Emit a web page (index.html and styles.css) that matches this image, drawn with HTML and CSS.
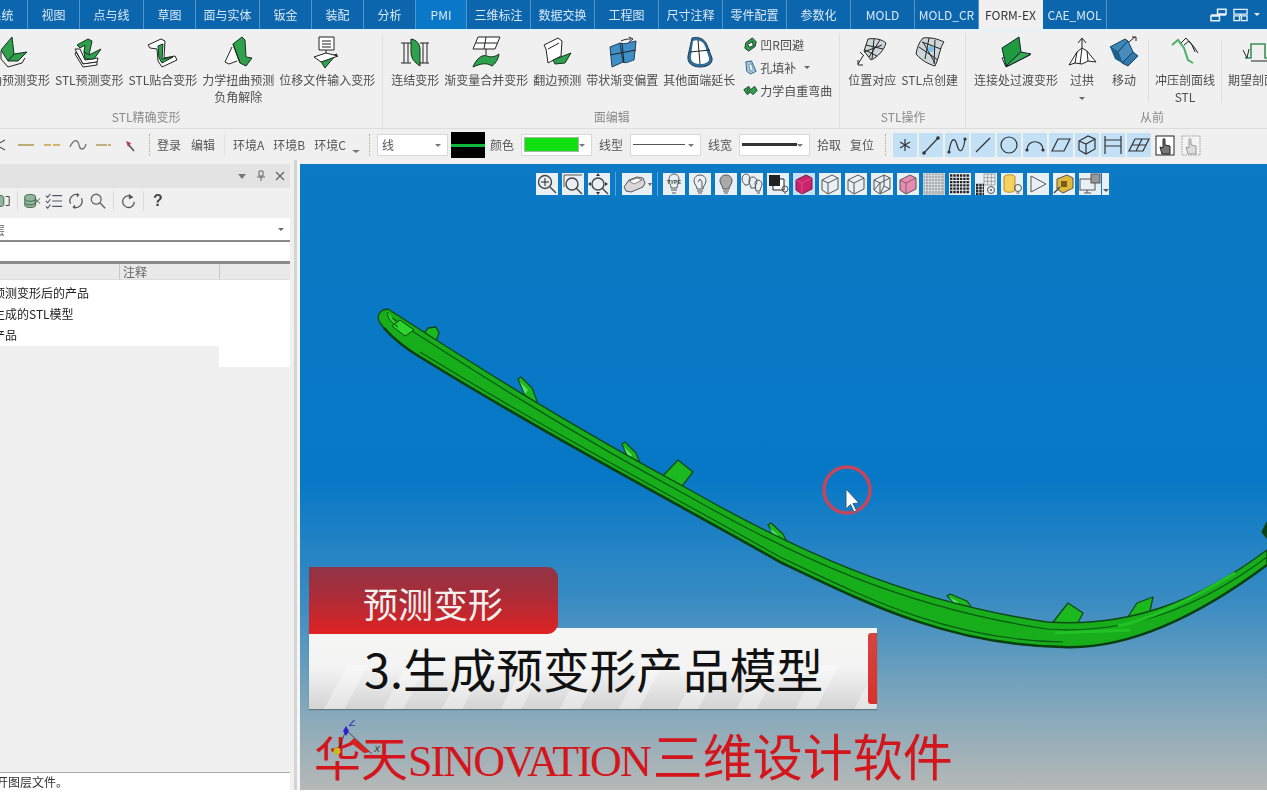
FILE: index.html
```html
<!DOCTYPE html>
<html lang="zh">
<head>
<meta charset="utf-8">
<title>SINOVATION FORM-EX</title>
<link rel="stylesheet" href="styles.css">
</head>
<body>
<svg class="defs" width="0" height="0" aria-hidden="true">
  <defs>
    <symbol id="r1" viewBox="0 0 32 32"><path class="ln" d="M3 15V23L10 31 24 27 27 22"/><path class="gr" d="M3 14 14 1 16 18 10 25Z"/><path class="gr" d="M16 18 29 16 20 25H10Z"/></symbol>
    <symbol id="r2" viewBox="0 0 32 32"><path class="wh" d="M2 13 4 17 10 28 24 26 25 22 12 24 7 13Z"/><path class="wh" d="M2 18 10 31 24 29 24 26 10 28 3 16Z"/><path class="gr" d="M4 9 15 3 19 5 16 19 11 16 12 9 7 12Z"/><path class="gr" d="M16 19 28 13 21 23H12L11 16Z"/></symbol>
    <symbol id="r3" viewBox="0 0 32 32"><path class="wh" d="M1 9 14 3 18 5 17 22 28 20 30 24 15 31 11 25 10 13 3 12Z"/><path class="gr" d="M11 10 16 8 15 23 26 21 15 27 12 22Z"/></symbol>
    <symbol id="r4" viewBox="0 0 32 32"><path class="wh" d="M10 11 3 26 7 28 15 25"/><path class="gr" d="M11 8 20 1 23 4 24 21 30 22 24 30 18 27Z"/><path class="ln" d="M11 8 18 27"/></symbol>
    <symbol id="r5" viewBox="0 0 32 32"><rect class="wh" x="8" y="1" width="15" height="13"/><path class="ln" d="M11 5H20M11 8H20M11 11H20M15 14V19"/><path class="gr" d="M9 24 26 18 18 27 14 32Z"/><path class="wh" d="M3 21 15 17 27 20 10 26Z"/></symbol>
    <symbol id="r6" viewBox="0 0 32 32"><path class="ln" d="M2 7H12M2 27H12M5 7V27M9 7V27M21 7H30M21 27H30M24 7V27M28 7V27"/><path class="gr" d="M12 3C18 4 21 8 21 14V30C15 26 12 22 12 16Z"/></symbol>
    <symbol id="r7" viewBox="0 0 32 32"><path class="wh" d="M8 1H30L25 13H3Z"/><path class="ln" d="M6 7H27M16 1 14 13M16 13V19"/><path class="gr" d="M3 31C6 23 12 18 17 20 22 22 26 20 29 18 28 24 25 28 22 30 16 26 10 28 3 31Z"/></symbol>
    <symbol id="r8" viewBox="0 0 32 32"><path class="wh" d="M3 9 17 2 21 5 20 20 7 27 5 13Z"/><path class="gr" d="M12 24 30 17 24 27 14 28Z"/><path class="ln" d="M7 13 18 7"/></symbol>
    <symbol id="r9" viewBox="0 0 32 32"><path class="bl" d="M4 11 14 7 17 26 6 31Z"/><path class="bl" d="M14 7C19 9 24 6 30 5L28 24C24 25 20 28 17 26Z"/><path class="ln" d="M4 19 30 14M16 7 18 27M15 5C19 3 22 3 25 3M23 1 27 3 23 6"/></symbol>
    <symbol id="r10" viewBox="0 0 32 32"><path d="M9 2C15 0 22 3 24 9L29 22C30 28 24 31 17 31 9 31 4 27 5 20Z" fill="#2f6f97" stroke="#1b3f5a"/><path d="M10 5C15 3 20 5 22 10L26 22C27 26 22 28 17 28 11 28 7 25 8 20Z" fill="#fff"/><path class="ln" d="M15 4 17 28M7 16 27 14"/></symbol>
    <symbol id="s1" viewBox="0 0 16 16"><path class="gr" d="M3 6 10 1 14 5 13 10 6 15 2 12Z"/><path class="wh" d="M5 8 10 5 11 9 7 11Z"/></symbol>
    <symbol id="s2" viewBox="0 0 16 16"><path d="M3 2 9 1 14 12 8 15 4 12Z" fill="#a9cbe2" stroke="#2e5f80"/><path d="M6 5 9 4 11 10 8 12Z" fill="#e8f4fb" stroke="#2e5f80" stroke-width=".6"/></symbol>
    <symbol id="s3" viewBox="0 0 18 16"><path class="gr" d="M1 7 7 3 9 7 14 3 17 8 12 13 9 10 5 13Z"/><path class="wh" d="M6 6 8 8 6 10Z"/></symbol>
    <symbol id="r11" viewBox="0 0 32 32"><path class="mesh" d="M12 3C18 2 26 3 30 7 28 14 22 21 15 24L8 15Z"/><path class="ln" d="M10 9 27 13M9 14 21 20M18 3 16 23M24 4 13 21M8 16 26 9"/><path class="ln" d="M7 20 2 28M2 24V29H7M4 16 8 20"/></symbol>
    <symbol id="r12" viewBox="0 0 32 32"><path class="mesh" d="M9 2C16 1 24 3 30 6 26 11 26 19 21 30 14 28 7 24 2 18 3 12 5 6 9 2Z"/><path class="ln" d="M5 11 24 24M8 6 27 13M15 2 11 23M21 4 20 28M9 6 21 27"/><circle cx="17" cy="13" r="3" fill="#7fc0e8"/></symbol>
    <symbol id="r13" viewBox="0 0 32 32"><path class="wh" d="M2 22 6 31 30 19 22 17Z"/><path d="M2 12 19 1 21 16 6 30Z" fill="#1f9a3c" stroke="#123"/><path d="M21 16 31 18 10 29 6 30Z" fill="#37ab52" stroke="#123"/></symbol>
    <symbol id="r14" viewBox="0 0 32 32"><path class="ln" d="M16 12V3M12 7 16 2 20 7"/><path class="wh" d="M3 29 11 16 16 12 21 15 30 26 22 25 16 28 9 27Z"/><path class="ln" d="M16 12 14 28M11 16 9 27M21 15 22 25"/></symbol>
    <symbol id="r15" viewBox="0 0 32 32"><path d="M2 11 17 3 20 5 10 16Z" fill="#3d86b8" stroke="#1b3f5a"/><path class="bl" d="M10 16 20 5 25 16 14 27Z"/><path d="M14 27 25 16 30 20 20 30Z" fill="#2f79ae" stroke="#1b3f5a"/><path d="M2 11 10 16 14 27 7 23Z" fill="#1f5f8d"/><path d="M21 6 27 1M24 1H28V5" class="ln"/><path d="M14 17 19 12M16 20 21 16" stroke="#d55" stroke-dasharray="1.5 1.5" fill="none"/></symbol>
    <symbol id="r16" viewBox="0 0 32 32"><path d="M3 9 9 4 15 12 19 24 24 27" fill="none" stroke="#4bae6a" stroke-width="2"/><path class="ln" d="M12 7 17 2 23 9 26 16M15 9 20 5 25 11 29 17"/></symbol>
    <symbol id="r17" viewBox="0 0 32 32"><path d="M3 22H9V8H23V22H30" fill="none" stroke="#3a8f58" stroke-width="1.6"/><path class="ln" d="M1 14 5 22 7 13M9 25H26"/></symbol>

    <symbol id="v-zoom" viewBox="0 0 22 22"><circle class="ln2" cx="9" cy="9" r="6.500"/><path class="ln" d="M9 5V13M5 9H13"/><path class="ln2" d="M14 14 20 20"/></symbol>
    <symbol id="v-fit" viewBox="0 0 22 22"><path class="lnb" d="M2 14V2H20"/><circle class="ln2" cx="10" cy="11" r="6"/><path class="ln2" d="M14 15 20 21"/></symbol>
    <symbol id="v-center" viewBox="0 0 22 22"><circle class="ln2" cx="10" cy="11" r="6"/><path class="ln2" d="M14 15 20 21"/><path d="M10 0 8 3H12ZM10 22 8 19H12ZM0 11 3 9V13ZM20 11 17 9V13Z" fill="#333"/></symbol>
    <symbol id="v-car" viewBox="0 0 30 22"><path d="M2 14 7 7 15 4 21 5 23 10 21 14 9 19 4 18Z" fill="#d8d8d8" stroke="#555"/><path d="M7 8 15 5 20 7 12 11Z" fill="#fff" stroke="#555" stroke-width=".7"/><path d="M26 10H30L28 13Z" fill="#666"/></symbol>
    <symbol id="v-type" viewBox="0 0 22 22"><path class="lnb" d="M6 7C6 3 8 1 11 1S16 3 16 7C16 10 14 11 14 15H8C8 11 6 10 6 7ZM8 17H14M9 20H13"/><text x="11" y="11" class="tiny">TYPE</text></symbol>
    <symbol id="v-bulb" viewBox="0 0 22 22"><path class="lnb" d="M5 8C5 4 8 2 11 2S17 4 17 8C17 11 14 13 14 16H8C8 13 5 11 5 8ZM8 18H14M9 20H13M9 9 11 6 13 9V15"/></symbol>
    <symbol id="v-bulbg" viewBox="0 0 22 22"><path d="M5 8C5 4 8 2 11 2S17 4 17 8C17 11 14 13 14 16H8C8 13 5 11 5 8Z" fill="#aaa" stroke="#555"/><path class="lnb" d="M8 18H14M9 20H13"/></symbol>
    <symbol id="v-bulbs" viewBox="0 0 22 22"><path class="lnb" d="M1 6C1 3 3 1 5 1S9 3 9 6C9 9 8 10 7 12H4C3 10 1 9 1 6ZM8 8C8 5 10 4 12 4S15 5 16 8C16 11 14 12 14 15H10C10 12 8 11 8 8ZM14 10C14 8 16 7 17 7S21 8 21 11 19 15 19 18H15C15 15 14 13 14 10ZM16 20H19"/></symbol>
    <symbol id="v-sq" viewBox="0 0 22 22"><rect class="wh" x="6" y="6" width="11" height="11"/><rect x="2" y="2" width="11" height="11" fill="#222"/><circle class="lnb" cx="18" cy="16" r="3"/><path class="lnb" d="M17 20H19"/></symbol>
    <symbol id="v-redcube" viewBox="0 0 22 22"><path d="M3 7 13 2 19 5V16L9 21 3 17Z" fill="#c9246c" stroke="#7c1244"/><path d="M3 7 9 10 19 5M9 10V21" fill="none" stroke="#e05a96" stroke-width=".8"/></symbol>
    <symbol id="v-pinkcube" viewBox="0 0 22 22"><path d="M3 7 13 2 19 5V16L9 21 3 17Z" fill="#e98bb0" stroke="#555"/><path d="M3 7 9 10 19 5M9 10V21" fill="none" stroke="#555" stroke-width=".7"/></symbol>
    <symbol id="v-cube" viewBox="0 0 22 22"><path class="lnb" d="M3 7 13 2 19 5V16L9 21 3 17ZM3 7 9 10 19 5M9 10V21"/></symbol>
    <symbol id="v-cube2" viewBox="0 0 22 22"><path class="lnb" d="M3 7 13 2 19 5V16L9 21 3 17ZM3 7 9 10 19 5M9 10V21M9 10 3 17M13 2 13 13 19 16M13 13 9 21"/></symbol>
    <symbol id="v-gridl" viewBox="0 0 22 22"><path class="grid" d="M1 1H21V21H1ZM4 1V21M7 1V21M10 1V21M13 1V21M16 1V21M19 1V21M1 4H21M1 7H21M1 10H21M1 13H21M1 16H21M1 19H21"/></symbol>
    <symbol id="v-gridd" viewBox="0 0 22 22"><path class="gridd" d="M1 2.500H21M1 5.800H21M1 9.100H21M1 12.400H21M1 15.700H21M1 19H21"/></symbol>
    <symbol id="v-grids" viewBox="0 0 22 22"><path class="grid" d="M9 1H20V12H9ZM12.600 1V12M16.300 1V12M9 4.600H20M9 8.300H20"/><path class="gridd" d="M1 12H9M1 15H9M1 18H9M1 21H9"/><circle class="lnb" cx="16" cy="17" r="3.500"/><circle cx="16" cy="17" r="1" fill="#555"/></symbol>
    <symbol id="v-cyl" viewBox="0 0 22 22"><path d="M3 4C3 1 14 1 14 4V17C14 20 3 20 3 17Z" fill="#f5d25e" stroke="#b0902a"/><circle class="lnb" cx="17" cy="15" r="3.500" fill="#fff"/><path class="lnb" d="M15.500 20H18.500"/></symbol>
    <symbol id="v-play" viewBox="0 0 22 22"><path class="lnb" d="M4 3 19 11 4 19Z"/></symbol>
    <symbol id="v-ycube" viewBox="0 0 22 22"><path d="M4 6 14 2 20 5V15L10 20 4 16Z" fill="#e0b93c" stroke="#555"/><rect x="8" y="8" width="6" height="6" fill="#7a5a18"/><path class="ln2" d="M7 14 1 20"/></symbol>
    <symbol id="v-mon" viewBox="0 0 22 22"><rect class="lnb" x="1" y="6" width="15" height="11"/><path class="lnb" d="M5 20H12M8 17V20"/><rect x="12" y="1" width="9" height="9" fill="#999" stroke="#555"/></symbol>

    <symbol id="t-star" viewBox="0 0 24 24"><path class="tl" d="M12 6V18M7 9 17 15M17 9 7 15"/></symbol>
    <symbol id="t-line" viewBox="0 0 24 24"><path class="tl" d="M5 20 19 5"/><circle class="td" cx="5" cy="20" r="1.800"/><circle class="td" cx="19" cy="5" r="1.800"/></symbol>
    <symbol id="t-spline" viewBox="0 0 24 24"><path class="tl" d="M4 19C6 4 10 4 12 12S18 21 20 6"/><circle class="td" cx="4" cy="19" r="1.600"/><circle class="td" cx="20" cy="6" r="1.600"/></symbol>
    <symbol id="t-slash" viewBox="0 0 24 24"><path class="tl" d="M5 19 19 5"/></symbol>
    <symbol id="t-circle" viewBox="0 0 24 24"><circle class="tl" cx="12" cy="12" r="8"/></symbol>
    <symbol id="t-arc" viewBox="0 0 24 24"><path class="tl" d="M4 17C4 6 20 6 20 17"/><circle class="td" cx="4" cy="17" r="1.600"/><circle class="td" cx="20" cy="17" r="1.600"/></symbol>
    <symbol id="t-para" viewBox="0 0 24 24"><path class="tl" d="M9 6H21L15 18H3Z"/></symbol>
    <symbol id="t-box" viewBox="0 0 24 24"><path class="tl" d="M4 8 13 3 20 6V16L11 21 4 17ZM4 8 11 11 20 6M11 11V21"/></symbol>
    <symbol id="t-dim" viewBox="0 0 24 24"><path class="tl" d="M4 3V21M20 3V21M4 7H20M4 13H20"/></symbol>
    <symbol id="t-plane" viewBox="0 0 24 24"><path class="tl" d="M8 6H22L16 18H2ZM5 12H19M15 6 9 18"/></symbol>
    <symbol id="t-hand" viewBox="0 0 24 24"><rect class="tb" x="3" y="3" width="18" height="19"/><path class="tf" d="M9 21 7 14 10 15V7C10 5 12 5 12 7V12L17 13V21Z"/></symbol>
    <symbol id="t-hand2" viewBox="0 0 24 24"><rect class="tb2" x="3" y="3" width="18" height="19"/><path class="tf2" d="M9 21 7 14 10 15V7C10 5 12 5 12 7V12L17 13V21Z"/></symbol>
  </defs>
</svg>

<header class="tabs">
  <div class="tab first">系统</div>
  <div class="tab">视图</div>
  <div class="tab wide">点与线</div>
  <div class="tab">草图</div>
  <div class="tab wide">面与实体</div>
  <div class="tab">钣金</div>
  <div class="tab">装配</div>
  <div class="tab">分析</div>
  <div class="tab lit">PMI</div>
  <div class="tab wide">三维标注</div>
  <div class="tab wide">数据交换</div>
  <div class="tab wide">工程图</div>
  <div class="tab wide">尺寸注释</div>
  <div class="tab wide">零件配置</div>
  <div class="tab wide">参数化</div>
  <div class="tab wide">MOLD</div>
  <div class="tab wide">MOLD_CR</div>
  <div class="tab wide active">FORM-EX</div>
  <div class="tab wide">CAE_MOL</div>
  <div class="tab-tools">
    <svg class="tt" viewBox="0 0 18 18"><path d="M1 9H17M8 3H17V8H8ZM1 10H10V15H1Z" fill="none" stroke="#e8f1f8" stroke-width="1.600"/></svg>
    <svg class="tt" viewBox="0 0 18 18"><path d="M2 3H16V8H2ZM2 10H8V15H2ZM10 10H16V15H10ZM9 8V10" fill="none" stroke="#e8f1f8" stroke-width="1.400"/></svg>
    <span class="tt-caret"></span>
    <svg class="tt" viewBox="0 0 18 18"><circle cx="9" cy="9" r="7" fill="#e8f1f8"/></svg>
  </div>
</header>

<section class="ribbon">
  <div class="group g1">
    <div class="items">
      <div class="spacer s56"></div>
      <div class="item"><svg class="ric"><use href="#r1"/></svg><span>精确预测变形</span></div>
      <div class="item"><svg class="ric"><use href="#r2"/></svg><span>STL预测变形</span></div>
      <div class="item"><svg class="ric"><use href="#r3"/></svg><span>STL贴合变形</span></div>
      <div class="item"><svg class="ric"><use href="#r4"/></svg><span>力学扭曲预测<br>负角解除</span></div>
      <div class="item"><svg class="ric"><use href="#r5"/></svg><span>位移文件输入变形</span></div>
    </div>
    <div class="glabel">STL精确变形</div>
  </div>
  <div class="group">
    <div class="items">
      <div class="item"><svg class="ric"><use href="#r6"/></svg><span>连结变形</span></div>
      <div class="item"><svg class="ric"><use href="#r7"/></svg><span>渐变量合并变形</span></div>
      <div class="item"><svg class="ric"><use href="#r8"/></svg><span>翻边预测</span></div>
      <div class="item"><svg class="ric"><use href="#r9"/></svg><span>带状渐变偏置</span></div>
      <div class="item"><svg class="ric"><use href="#r10"/></svg><span>其他面端延长</span></div>
      <div class="smalls">
        <div class="small"><svg class="sic"><use href="#s1"/></svg>凹R回避</div>
        <div class="small"><svg class="sic"><use href="#s2"/></svg>孔填补<i class="caret"></i></div>
        <div class="small"><svg class="sic"><use href="#s3"/></svg>力学自重弯曲</div>
      </div>
    </div>
    <div class="glabel">面编辑</div>
  </div>
  <div class="group">
    <div class="items">
      <div class="item"><svg class="ric"><use href="#r11"/></svg><span>位置对应</span></div>
      <div class="item"><svg class="ric"><use href="#r12"/></svg><span>STL点创建</span></div>
    </div>
    <div class="glabel">STL操作</div>
  </div>
  <div class="group last">
    <div class="items">
      <div class="item"><svg class="ric"><use href="#r13"/></svg><span>连接处过渡变形</span></div>
      <div class="item w38"><svg class="ric"><use href="#r14"/></svg><span>过拱<br><i class="caret alone"></i></span></div>
      <div class="item w36"><svg class="ric"><use href="#r15"/></svg><span>移动</span></div>
      <div class="vsep"></div>
      <div class="item w60"><svg class="ric"><use href="#r16"/></svg><span>冲压剖面线<br>STL</span></div>
      <div class="vsep"></div>
      <div class="item w60"><svg class="ric"><use href="#r17"/></svg><span>期望剖面线</span></div>
      <div class="spacer s37"></div>
    </div>
    <div class="glabel">从前</div>
  </div>
</section>

<nav class="toolbar">
  <div class="tbtn"><svg class="lic" viewBox="0 0 18 18"><path d="M14 4 5 9 14 14" fill="none" stroke="#555" stroke-width="1.200"/></svg></div>
  <div class="tbtn"><svg class="lic" viewBox="0 0 18 18"><path d="M1 9H17" stroke="#b09a5a" stroke-width="1.600"/></svg></div>
  <div class="tbtn"><svg class="lic" viewBox="0 0 18 18"><path d="M1 9H17" stroke="#c8a040" stroke-width="1.600" stroke-dasharray="7 2"/></svg></div>
  <div class="tbtn"><svg class="lic" viewBox="0 0 18 18"><path d="M1 11C5 2 9 4 10 9S15 15 17 8" fill="none" stroke="#777" stroke-width="1.300"/></svg></div>
  <div class="tbtn"><svg class="lic" viewBox="0 0 18 18"><path d="M1 9H17" stroke="#b09a5a" stroke-width="1.600" stroke-dasharray="11 1 3 1"/></svg></div>
  <div class="tbtn"><svg class="lic" viewBox="0 0 18 18"><path d="M7 8 13 15" stroke="#555" stroke-width="1.600"/><path d="M5 5 10 7 7 11Z" fill="#b8403f"/></svg></div>
  <i class="dots m6-7"></i>
  <span class="tl-text">登录</span><span class="tl-text m10">编辑</span>
  <i class="soft m9-8"></i>
  <span class="tl-text">环境A</span><span class="tl-text m9">环境B</span><span class="tl-text m9">环境C</span>
  <i class="caret low"></i>
  <i class="dots m9-7"></i>
  <div class="combo"><span class="combo-text">线</span></div>
  <div class="swatch m3"></div>
  <span class="tl-text m5">颜色</span>
  <div class="combo m7"><span class="greenbar"></span></div>
  <span class="tl-text m7">线型</span>
  <div class="combo m7"><span class="thin"></span></div>
  <span class="tl-text m7">线宽</span>
  <div class="combo m7"><span class="thick"></span></div>
  <span class="tl-text m7">拾取</span><span class="tl-text m9">复位</span>
  <i class="dots m11-7"></i>
  <div class="ticons">
    <svg class="tic on"><use href="#t-star"/></svg>
    <svg class="tic on"><use href="#t-line"/></svg>
    <svg class="tic on"><use href="#t-spline"/></svg>
    <svg class="tic on"><use href="#t-slash"/></svg>
    <svg class="tic on"><use href="#t-circle"/></svg>
    <svg class="tic on"><use href="#t-arc"/></svg>
    <svg class="tic on"><use href="#t-para"/></svg>
    <svg class="tic on"><use href="#t-box"/></svg>
    <svg class="tic on"><use href="#t-dim"/></svg>
    <svg class="tic on"><use href="#t-plane"/></svg>
    <svg class="tic"><use href="#t-hand"/></svg>
    <svg class="tic"><use href="#t-hand2"/></svg>
  </div>
</nav>

<main class="main">
  <aside class="panel">
    <div class="panel-inner">
      <div class="phead">
        <svg class="ph" viewBox="0 0 12 12"><path d="M2 4H10L6 9Z" fill="#777"/></svg>
        <svg class="ph" viewBox="0 0 12 12"><path d="M4 1H8V6H4ZM2 7H10M6 7V11" fill="none" stroke="#666"/></svg>
        <svg class="ph" viewBox="0 0 12 12"><path d="M2 2 10 10M10 2 2 10" stroke="#666" stroke-width="1.300"/></svg>
      </div>
      <div class="ptools">
        <svg class="pt clipped" viewBox="0 0 20 20"><path d="M2 6C2 3 12 3 12 6V14C12 17 2 17 2 14Z" fill="#8fb79a" stroke="#3f5f47"/><path d="M14 5H18V15H14" fill="none" stroke="#333"/></svg>
        <i class="psep"></i>
        <svg class="pt" viewBox="0 0 20 20"><path d="M2 5C2 2 14 2 14 5V15C14 18 2 18 2 15Z" fill="#8fb79a" stroke="#3f5f47"/><path d="M2 8C2 11 14 11 14 8M2 12C2 15 14 15 14 12" fill="none" stroke="#3f5f47"/><path d="M13 7 19 13M19 7 13 13" stroke="#444"/></svg>
        <svg class="pt" viewBox="0 0 20 20"><path d="M8 4H19M8 10H19M8 16H19M1 4 3 6 6 2M1 10 3 12 6 8M1 16 3 18 6 14" fill="none" stroke="#556" stroke-width="1.200"/></svg>
        <svg class="pt" viewBox="0 0 20 20"><path d="M4 13A7 7 0 0 1 12 3M16 7A7 7 0 0 1 8 17" fill="none" stroke="#555" stroke-width="1.400"/><path d="M11 1 14 3 11 6ZM9 14 6 17 9 19Z" fill="#555"/></svg>
        <svg class="pt" viewBox="0 0 20 20"><circle cx="8" cy="8" r="5.500" fill="none" stroke="#666" stroke-width="1.400"/><path d="M12 12 18 18" stroke="#666" stroke-width="1.600"/></svg>
        <i class="psep"></i>
        <svg class="pt" viewBox="0 0 20 20"><path d="M15 6A6.500 6.500 0 1 0 17 11" fill="none" stroke="#555" stroke-width="1.400"/><path d="M11 2 16 6 11 8Z" fill="#555"/></svg>
        <i class="psep"></i>
        <b class="qmark">?</b>
      </div>
      <div class="pcombo"><span class="pcombo-text">图层</span><i class="caret"></i></div>
      <div class="pblank"></div>
      <div class="thead"><span class="tc1"></span><span class="tc2">注释</span><span class="tc3"></span></div>
      <div class="tbody">
        <div class="trow">预测变形后的产品</div>
        <div class="trow">生成的STL模型</div>
        <div class="trow">产品</div>
        <div class="trow grey"></div>
      </div>
      <div class="pfill"></div>
      <div class="pstatus">打开图层文件。</div>
    </div>
  </aside>
  <div class="gutter"></div>
  <section class="view">
    <svg class="part" viewBox="300 164 967 626">
      <g class="clip">
        <path d="M424 334 428 328 436 327 439 333 436 341 428 343Z"/>
        <path d="M657 482 678 460 693 472 675 495Z"/>
        <path d="M1043 635 1068 603 1083 613 1072 634Z"/>
        <path d="M1122 626 1137 603 1153 597 1150 611 1133 627Z"/>
        <path class="dark" d="M1262 532 1267 522V538Z"/>
      </g>
      <g class="hooks">
        <g><path d="M518 379 521 377 532 388 537 401 533 408 526 404 524 393Z"/><path class="hl" d="M520 382 528 390 525 394Z"/><path class="st" d="M524 394 527 405"/></g>
        <g><path d="M622 444 625 442 636 453 641 466 637 473 630 469 628 458Z"/><path class="hl" d="M624 447 632 455 629 459Z"/><path class="st" d="M628 459 631 470"/></g>
        <g><path d="M768 525 771 523 783 534 789 546 785 552 778 549 776 538Z"/><path class="hl" d="M770 528 778 535 775 539Z"/><path class="st" d="M776 539 779 550"/></g>
        <g><path d="M947 596 950 594 967 601 972 608 971 616 960 617 958 606Z"/><path class="hl" d="M949 597 958 602 956 605Z"/><path class="st" d="M959 606 960 616"/></g>
      </g>
      <path class="body" d="M388 309C470 362 560 420 690 490 790 547 900 600 1047 622 1130 628 1200 600 1267 550V565C1200 615 1130 650 1063 647 950 645 870 605 780 562 680 505 560 443 420 357 400 345 385 330 380 323 377 318 378 313 383 310Z"/>
      <path class="groove" d="M392 318C474 371 564 429 690 497 790 554 900 607 1047 629 1130 635 1200 607 1267 557"/>
      <path class="groove" d="M1063 642C950 640 870 600 780 557 680 500 560 438 420 352"/>
      <path class="under" d="M1267 565C1200 615 1130 650 1063 647 950 645 870 605 780 562 680 505 560 443 420 357 400 345 390 335 384 328"/>
      <path class="cap" d="M388 312C386 317 392 323 398 327M400 320 414 330 405 336 392 326Z"/>
      <path class="shine" d="M1118 626C1150 620 1190 600 1235 573M1055 633 1130 630"/>
    </svg>
    <div class="vtools">
      <svg class="vt"><use href="#v-zoom"/></svg>
      <svg class="vt"><use href="#v-fit"/></svg>
      <svg class="vt"><use href="#v-center"/></svg>
      <i class="vsp v1"></i>
      <svg class="vt wide"><use href="#v-car"/></svg>
      <i class="vsp"></i>
      <svg class="vt"><use href="#v-type"/></svg>
      <svg class="vt"><use href="#v-bulb"/></svg>
      <svg class="vt"><use href="#v-bulbg"/></svg>
      <svg class="vt"><use href="#v-bulbs"/></svg>
      <svg class="vt"><use href="#v-sq"/></svg>
      <svg class="vt hi"><use href="#v-redcube"/></svg>
      <svg class="vt"><use href="#v-cube"/></svg>
      <svg class="vt"><use href="#v-cube"/></svg>
      <svg class="vt"><use href="#v-cube2"/></svg>
      <svg class="vt"><use href="#v-pinkcube"/></svg>
      <svg class="vt"><use href="#v-gridl"/></svg>
      <svg class="vt"><use href="#v-gridd"/></svg>
      <svg class="vt"><use href="#v-grids"/></svg>
      <svg class="vt"><use href="#v-cyl"/></svg>
      <svg class="vt"><use href="#v-play"/></svg>
      <svg class="vt"><use href="#v-ycube"/></svg>
      <svg class="vt"><use href="#v-mon"/></svg>
      <span class="vt-more"></span>
    </div>
    <svg class="pointer" viewBox="0 0 54 54">
      <circle cx="27" cy="27" r="23" class="ring"/>
      <path d="M26 26V46L30.500 41.500 34 49 36.500 47.500 33 40.500 39 40Z" class="arrow"/>
    </svg>
    <div class="tag">预测变形</div>
    <div class="band"><span class="band-text">3.生成预变形产品模型</span><i class="band-mark"></i></div>
    <svg class="triad" viewBox="0 0 60 50">
      <path d="M16 10 42 34M16 10 7 34" stroke="#223" stroke-width=".7" fill="none"/>
      <path d="M16 6 19 11 16 16 13 11Z" fill="#3320c8"/>
      <path d="M24 18 40 32 34 33 20 22Z" fill="#d8201c"/>
      <circle cx="7" cy="31" r="3.500" fill="#c9b81a"/>
      <text x="19" y="6" class="az">Z</text>
      <text x="44" y="32" class="ax">X</text>
    </svg>
    <div class="mark">华天<span class="mark-lat">SINOVATION</span><span class="mark-end">三维设计软件</span></div>
  </section>
</main>
<div class="foot"></div>
</body>
</html>
```
FILE: styles.css
```css
* { box-sizing: border-box; }
html, body { margin: 0; padding: 0; }
body {
  width: 1267px; height: 792px; overflow: hidden;
  display: flex; flex-direction: column;
  background: #f0f0f0;
  font: 12px/17px "Noto Sans CJK SC", "Noto Sans", sans-serif;
  color: #444;
}
i { font-style: normal; display: block; }
.defs { position: absolute; }

.ln { fill: none; stroke: #222; stroke-width: 1; }
.ln2 { fill: none; stroke: #444; stroke-width: 1.4; }
.lnb { fill: none; stroke: #555; stroke-width: 1; }
.gr { fill: #2fa14c; stroke: #16301f; stroke-width: 1; stroke-linejoin: round; }
.wh { fill: #fff; stroke: #222; stroke-width: 1; stroke-linejoin: round; }
.bl { fill: #3f8fc6; stroke: #1b3f5a; stroke-width: 1; stroke-linejoin: round; }
.mesh { fill: #cfd6da; stroke: #222; stroke-width: 1; }
.grid { fill: none; stroke: #888; stroke-width: .7; }
.gridd { fill: none; stroke: #222; stroke-width: 2.3; stroke-dasharray: 2.4 .9; }
.tiny { font: 700 5.5px "Liberation Sans", sans-serif; fill: #444; text-anchor: middle; }
.tl { fill: none; stroke: #333; stroke-width: 1.2; }
.td { fill: #333; }
.tb { fill: #fff; stroke: #222; stroke-width: 1; }
.tf { fill: #777; stroke: #222; stroke-width: 1; }
.tb2 { fill: #f4f4f4; stroke: #999; stroke-dasharray: 1.5 1; }
.tf2 { fill: #ddd; stroke: #999; }

/* tabs */
.tabs {
  flex: none; height: 29px; display: flex;
  background: #0b66ae; color: #dbe9f4;
  line-height: 29px; overflow: hidden;
  filter: blur(.3px);
}
.tab {
  flex: none; width: 52px; text-align: center; white-space: nowrap; overflow: hidden;
  border-right: 1px solid #4f97cb;
}
.tab.first { margin-left: -24px; }
.tab.wide { width: 64px; }
.tab.lit { width: 51px; background: #0a78c6; }
.tab.active { background: #f0f0f0; color: #333; border-right-color: #f0f0f0; }
.tab-tools { margin-left: 103px; display: flex; align-items: center; gap: 5px; }
.tt { width: 17px; height: 18px; flex: none; }
.tt-caret { width: 0; height: 0; border: 3px solid transparent; border-top-color: #e8f1f8; margin: 3px 2px 0 0; }

/* ribbon */
.ribbon {
  flex: none; height: 100px; display: flex;
  border-top: 2px solid #e4f2fb;
  border-bottom: 1px solid #dcdcdc;
  padding: 3px 0 0;
  filter: blur(.3px);
}
.group {
  flex: none; display: flex; flex-direction: column;
  padding: 2px 7px 0 8px;
  border-right: 1px solid #dedede;
}
.group.g1 { margin-left: -83px; padding-left: 0; }
.group.last { border-right: 0; padding-right: 0; }
.items { flex: none; height: 70px; display: flex; gap: 5px; }
.item {
  flex: none; display: flex; flex-direction: column; align-items: center;
  text-align: center; white-space: nowrap; color: #4d4d4d;
}
.item.w38 { width: 38px; }
.item.w36 { width: 36px; }
.item.w60 { width: 60px; }
.ric { width: 32px; height: 32px; flex: none; margin-bottom: 3px; }
.spacer { flex: none; }
.spacer.s56 { width: 56px; }
.spacer.s37 { width: 37px; }
.vsep { flex: none; width: 1px; height: 62px; background: #dedede; margin: 4px 1px 0; }
.smalls { margin-left: 3px; width: 89px; flex: none; margin-top: -3px; }
.small { height: 23px; display: flex; align-items: center; gap: 2px; white-space: nowrap; color: #4d4d4d; }
.sic { width: 15px; height: 15px; flex: none; }
.caret {
  width: 0; height: 0; flex: none;
  border: 3px solid transparent; border-top: 3px solid #666; border-bottom: 0;
  margin-left: 6px;
}
.caret.alone { display: inline-block; margin: 0; vertical-align: middle; }
.caret.low { margin: 14px 0 0 6px; width: 8px; border-width: 3px 4px 0; border-top-color: #777; }
.glabel { flex: none; height: 22px; line-height: 22px; text-align: center; color: #8a8a8a; white-space: nowrap; }

/* toolbar */
.toolbar {
  flex: none; height: 31px; display: flex; align-items: center;
  margin-left: -13px; background: #f0f0f0; white-space: nowrap;
  filter: blur(.3px);
}
.tbtn { flex: none; width: 26px; height: 24px; display: flex; align-items: center; justify-content: center; }
.lic { width: 18px; height: 18px; }
.tl-text { flex: none; color: #555; }
.m3 { margin-left: 3px; } .m5 { margin-left: 5px; } .m7 { margin-left: 7px; } .m9 { margin-left: 9px; } .m10 { margin-left: 10px; }
.dots { flex: none; width: 1px; height: 22px; border-left: 1px dotted #b0a890; }
.soft { flex: none; width: 1px; height: 22px; background: #e2e2e2; }
.m6-7 { margin: 0 7px 0 6px; }
.m9-8 { margin: 0 8px 0 9px; }
.m9-7 { margin: 0 7px 0 9px; }
.m11-7 { margin: 0 7px 0 11px; }
.combo {
  flex: none; width: 71px; height: 22px; position: relative;
  background: #fff; border: 1px solid #d8d8d8; display: flex; align-items: center;
}
.combo::after {
  content: ""; position: absolute; right: 6px; top: 9px;
  border: 3px solid transparent; border-top-color: #777; border-bottom: 0;
}
.combo-text { margin-left: 4px; color: #555; }
.swatch {
  flex: none; width: 34px; height: 26px;
  background: linear-gradient(#000 0 46%, #12b83c 46% 58%, #000 58%);
}
.greenbar { width: 55px; height: 15px; margin-left: 2px; background: #10e012; border: 1px solid #a8b8a8; }
.thin { width: 52px; height: 1px; margin-left: 2px; background: #555; }
.thick { width: 55px; height: 2.5px; margin-left: 2px; background: #333; }
.ticons { flex: none; display: flex; gap: 2px; }
.tic { width: 24px; height: 24px; flex: none; }
.tic.on { background: #c3e1f6; }

/* main */
.main { flex: none; height: 630px; display: flex; }
.panel { flex: none; width: 297px; overflow: hidden; padding-top: 4px; background: #f0f0f0; border-right: 3px solid #d4d4d4; filter: blur(.3px); }
.panel-inner { width: 290px; height: 100%; display: flex; flex-direction: column; }
.phead {
  flex: none; height: 24px; background: #e3e3e3;
  display: flex; align-items: center; justify-content: flex-end; gap: 7px; padding-right: 4px;
}
.ph { width: 12px; height: 12px; }
.ptools { flex: none; height: 26px; display: flex; align-items: center; gap: 4px; }
.pt { width: 18px; height: 18px; flex: none; }
.pt.clipped { margin-left: -7px; }
.psep { flex: none; width: 1px; height: 20px; background: #dcdcdc; margin: 0 1px 0 2px; }
.qmark { font: 700 16px "Liberation Sans", sans-serif; color: #444; margin-left: 4px; }
.pcombo {
  flex: none; height: 24px; margin-top: 4px; background: #fff;
  border-bottom: 2px solid #8a8a8a; display: flex; align-items: center; justify-content: space-between;
  padding-right: 6px;
}
.pcombo-text { margin-left: -19px; color: #666; }
.pblank { flex: none; height: 22px; background: #fff; border-bottom: 3px solid #8a8a8a; }
.thead { flex: none; height: 16px; display: flex; background: #e9e9e9; line-height: 16px; border-bottom: 1px solid #ddd; }
.tc1 { width: 120px; border-right: 1px solid #c8c8c8; }
.tc2 { width: 100px; border-right: 1px solid #c8c8c8; padding-left: 3px; color: #666; }
.tc3 { flex: 1; }
.tbody { flex: none; height: 87px; background: #fff; padding-top: 3px; }
.trow { height: 21px; line-height: 20px; margin-left: -7px; white-space: nowrap; color: #222; }
.trow.grey { margin-left: 0; width: 219px; background: #efefef; }
.pfill { flex: 1; }
.pstatus { flex: none; height: 18px; line-height: 18px; margin-left: -16px; background: #fff; border-top: 1px solid #aaa; color: #333; white-space: nowrap; }

.gutter { flex: none; width: 3px; background: #f6f6f6; }
.view {
  flex: 1; margin-top: 4px; position: relative; overflow: hidden;
  background: linear-gradient(#0c7ac4 0, #0678c6 50%, #3a8cc2 70%, #7ba5bc 85%, #b6b8b6 100%);
}
.part { position: absolute; left: 0; top: 0; width: 967px; height: 626px; }
.body { fill: #17ad1b; stroke: #0c4a14; stroke-width: 1.4; stroke-linejoin: round; }
.groove { fill: none; stroke: #0b5a16; stroke-width: 1.2; }
.under { fill: none; stroke: #0a3f12; stroke-width: 2.6; }
.cap { fill: #2ed42e; stroke: #0c4a14; stroke-width: 1; }
.shine { fill: none; stroke: #22c226; stroke-width: 3; }
.clip path { fill: #1cb81f; stroke: #0c4a14; stroke-width: 1.3; stroke-linejoin: round; }
.clip path.dark { fill: #0d3d1a; }
.hooks path { fill: #1cb81f; stroke: #0c4a14; stroke-width: 1.2; stroke-linejoin: round; }
.hooks path.hl { fill: #5ee05e; stroke: none; }
.hooks path.st { fill: none; stroke: #0a3f12; stroke-width: 2; }

.vtools { position: absolute; left: 236px; top: 8px; display: flex; gap: 4px; align-items: center; }
.vt { width: 22px; height: 22px; flex: none; background: #e9f0f5; }
.vt.wide { width: 30px; }
.vt.hi { background: #c3e1f6; }
.vsp { width: 1px; height: 24px; background: #5aa5d8; margin: 0 1px; flex: none; }
.vsp.v1 { margin: 0 2px 0 1px; }
.vt-more { width: 7px; height: 22px; flex: none; background: #e9f0f5; position: relative; margin-left: -3px; }
.vt-more::after { content: ""; position: absolute; left: 1px; bottom: 3px; border: 3px solid transparent; border-top-color: #555; border-bottom: 0; }

.pointer { position: absolute; left: 520px; top: 299px; width: 54px; height: 54px; }
.ring { fill: none; stroke: #c4455c; stroke-width: 3.5; }
.arrow { fill: #fff; stroke: #2b5f8e; stroke-width: 1; stroke-linejoin: round; }

.tag {
  position: absolute; z-index: 2; left: 9px; top: 403px; width: 249px; height: 67px;
  padding: 13px 0 0 54px;
  background: linear-gradient(#8f3445, #ac2c38 45%, #e02222);
  border-radius: 0 11px 11px 0;
  color: #f4f0ee; font-size: 35px; line-height: 46px; white-space: nowrap;
}
.band {
  position: absolute; left: 9px; top: 464px; width: 568px; height: 81px;
  display: flex; align-items: center; padding: 0 0 1px 55px;
  background: linear-gradient(#f5f6f4, #f3f3f3 50%, #d4d4d4);
  box-shadow: 0 1px 1px rgba(60,70,80,.5);
}
.band::before {
  content: ""; position: absolute; left: 0; right: 0; bottom: 0; height: 44px;
  background: repeating-linear-gradient(118deg, rgba(0,0,0,0) 0 34px, rgba(255,255,255,.35) 34px 52px);
}
.band-text { position: relative; color: #111; font-size: 46.700px; line-height: 60px; white-space: nowrap; }
.band-mark {
  position: absolute; right: 0; top: 5px; width: 9px; height: 71px;
  border-radius: 3px 0 0 3px; background: linear-gradient(#d6453f, #d8302c);
}
.triad { position: absolute; left: 30px; top: 556px; width: 60px; height: 50px; z-index: 2; }
.az { font: italic 11px "Liberation Sans", sans-serif; fill: #2a30c8; }
.ax { font: italic 9px "Liberation Sans", sans-serif; fill: #333; }
.mark {
  position: absolute; left: 14px; top: 558px; white-space: nowrap;
  color: #d3161c; font-size: 47px; line-height: 64px;
  font-family: "Noto Sans CJK SC", sans-serif;
}
.mark-lat { font-family: "Liberation Serif", serif; font-size: 44px; letter-spacing: -1.900px; margin-right: 3px; }
.mark-end { font-size: 50px; }
.foot { flex: none; height: 2px; background: #fff; }
```
